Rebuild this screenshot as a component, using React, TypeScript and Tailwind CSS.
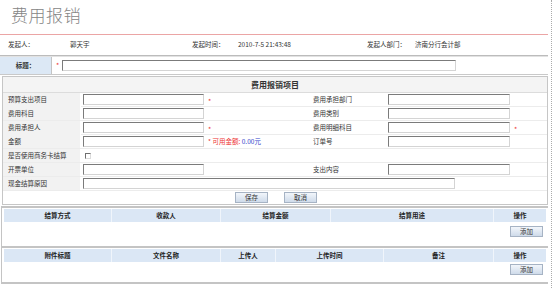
import React from 'react';

const Input = ({ w }: { w: string }) => (
  <span className={`block ${w} h-[11px] border border-t-[#7b7b7b] border-l-[#7b7b7b] border-r-[#d4d4d4] border-b-[#d4d4d4] bg-white`} />
);

const Star = () => <span className="text-[#e33] text-[7px] leading-none">*</span>;

const Btn = ({ label }: { label: string }) => (
  <button className="w-[33px] h-[11px] border border-[#a6b3c4] bg-gradient-to-b from-[#f2f6fb] to-[#cfdbea] text-[6.5px] leading-[9px] text-[#333]">
    {label}
  </button>
);

const rows: { left: string; leftStar?: boolean; note?: boolean; right?: string; rightStar?: boolean; check?: boolean; wide?: boolean }[] = [
  { left: '预算支出项目', leftStar: true, right: '费用承担部门' },
  { left: '费用科目', right: '费用类别' },
  { left: '费用承担人', leftStar: true, right: '费用明细科目', rightStar: true },
  { left: '金额', note: true, right: '订单号' },
  { left: '是否使用商务卡结算', check: true },
  { left: '开票单位', right: '支出内容' },
  { left: '现金结算原因', wide: true },
];

export default function App() {
  return (
    <div className="w-[553px] h-[288px] bg-white overflow-hidden font-['Noto_Sans_CJK_SC',sans-serif] text-[6.5px] text-[#333]">
      <div className="w-[552px] h-full border-r border-dotted border-[#aaa]">
        <h1 className="h-[34px] pl-[11px] pt-[4px] text-[17px] leading-[22px] font-light text-[#858585] tracking-[0.5px]">费用报销</h1>
        <div className="w-[548px] border-t border-[#eba5a5]" />

        <div className="h-[20px] grid grid-cols-[62px_122px_46px_129px_48px_1fr] items-center pl-[8px]">
          <span>发起人：</span>
          <span>郭天宇</span>
          <span>发起时间：</span>
          <span>2010-7-5 21:43:48</span>
          <span>发起人部门：</span>
          <span>济南分行会计部</span>
        </div>
        <div className="w-[548px] border-t border-b border-t-[#bcbcbc] border-b-[#e2e2e2]" />

        <div className="w-[548px] h-[18px] flex items-center border-b border-[#c9c9c9]">
          <div className="w-[52px] h-full bg-[#dce8f5] border-r border-[#c4c4c4] flex items-center justify-center font-bold">标题：</div>
          <span className="ml-[4px] mr-[3px]"><Star /></span>
          <Input w="w-[394px]" />
        </div>

        <div className="ml-[2px] mt-[1px] w-[546px] border border-[#c6c6c6]">
          <div className="h-[16px] bg-[#f4f4f4] border-b border-[#dcdcdc] flex items-center justify-center font-bold text-[8px]">费用报销项目</div>
          {rows.map(r => (
            <div key={r.left} className="h-[14px] grid grid-cols-[78px_229px_76px_1fr] border-b border-[#ececec]">
              <div className="bg-[#f2f2f2] border-r border-white flex items-center pl-[5px]">{r.left}</div>
              {r.wide ? (
                <div className="col-span-3 flex items-center pl-[2px]"><Input w="w-[372px]" /></div>
              ) : (
                <>
                  <div className="flex items-center pl-[2px] gap-[4px]">
                    {r.check ? (
                      <span className="ml-[2px] block w-[6px] h-[6px] border border-t-[#6f6f6f] border-l-[#6f6f6f] border-r-[#dcdcdc] border-b-[#dcdcdc]" />
                    ) : (
                      <Input w="w-[121px]" />
                    )}
                    {r.leftStar && <span className="pt-[4px]"><Star /></span>}
                    {r.note && (
                      <span className="pt-[1px]">
                        <span className="text-[#e33]">* 可用金额: </span>
                        <span className="text-[#3344cc]">0.00元</span>
                      </span>
                    )}
                  </div>
                  {r.right ? (
                    <>
                      <div className="flex items-center pl-[3px]">{r.right}</div>
                      <div className="flex items-center pl-[2px] gap-[4px]">
                        <Input w="w-[122px]" />
                        {r.rightStar && <span className="pt-[4px]"><Star /></span>}
                      </div>
                    </>
                  ) : (
                    <div className="col-span-2" />
                  )}
                </>
              )}
            </div>
          ))}
          <div className="h-[13px] flex items-center justify-center gap-[16px] pl-[2px]">
            <Btn label="保存" />
            <Btn label="取消" />
          </div>
        </div>

        <div className="ml-[1px] mt-[1px] w-[547px] border-l border-[#c4c4c4]">
          <div className="border-t-2 border-[#c4c4c4]" />
          <div className="px-[2px] pt-[1px]">
            <div className="h-[13px] grid grid-cols-[108px_109px_110px_163px_1fr] bg-[#dbe7f5] font-bold text-[6.5px] text-[#222]">
              {['结算方式', '收款人', '结算金额', '结算用途', '操作'].map((h, i) => (
                <div key={h} className={`flex items-center justify-center ${i < 4 ? 'border-r border-[#f0f5fb]' : ''}`}>{h}</div>
              ))}
            </div>
            <div className="h-[24px] flex justify-end pt-[4px] pr-[3px]">
              <Btn label="添加" />
            </div>
          </div>
          <div className="border-t-2 border-[#c4c4c4]" />
          <div className="px-[2px] pt-[1px]">
            <div className="h-[13px] grid grid-cols-[108px_109px_55px_108px_110px_1fr] bg-[#dbe7f5] font-bold text-[6.5px] text-[#222]">
              {['附件标题', '文件名称', '上传人', '上传时间', '备注', '操作'].map((h, i) => (
                <div key={h} className={`flex items-center justify-center ${i < 5 ? 'border-r border-[#f0f5fb]' : ''}`}>{h}</div>
              ))}
            </div>
            <div className="h-[20px] flex justify-end pt-[2px] pr-[3px]">
              <Btn label="添加" />
            </div>
          </div>
          <div className="border-t-2 border-[#c4c4c4]" />
        </div>
      </div>
    </div>
  );
}
